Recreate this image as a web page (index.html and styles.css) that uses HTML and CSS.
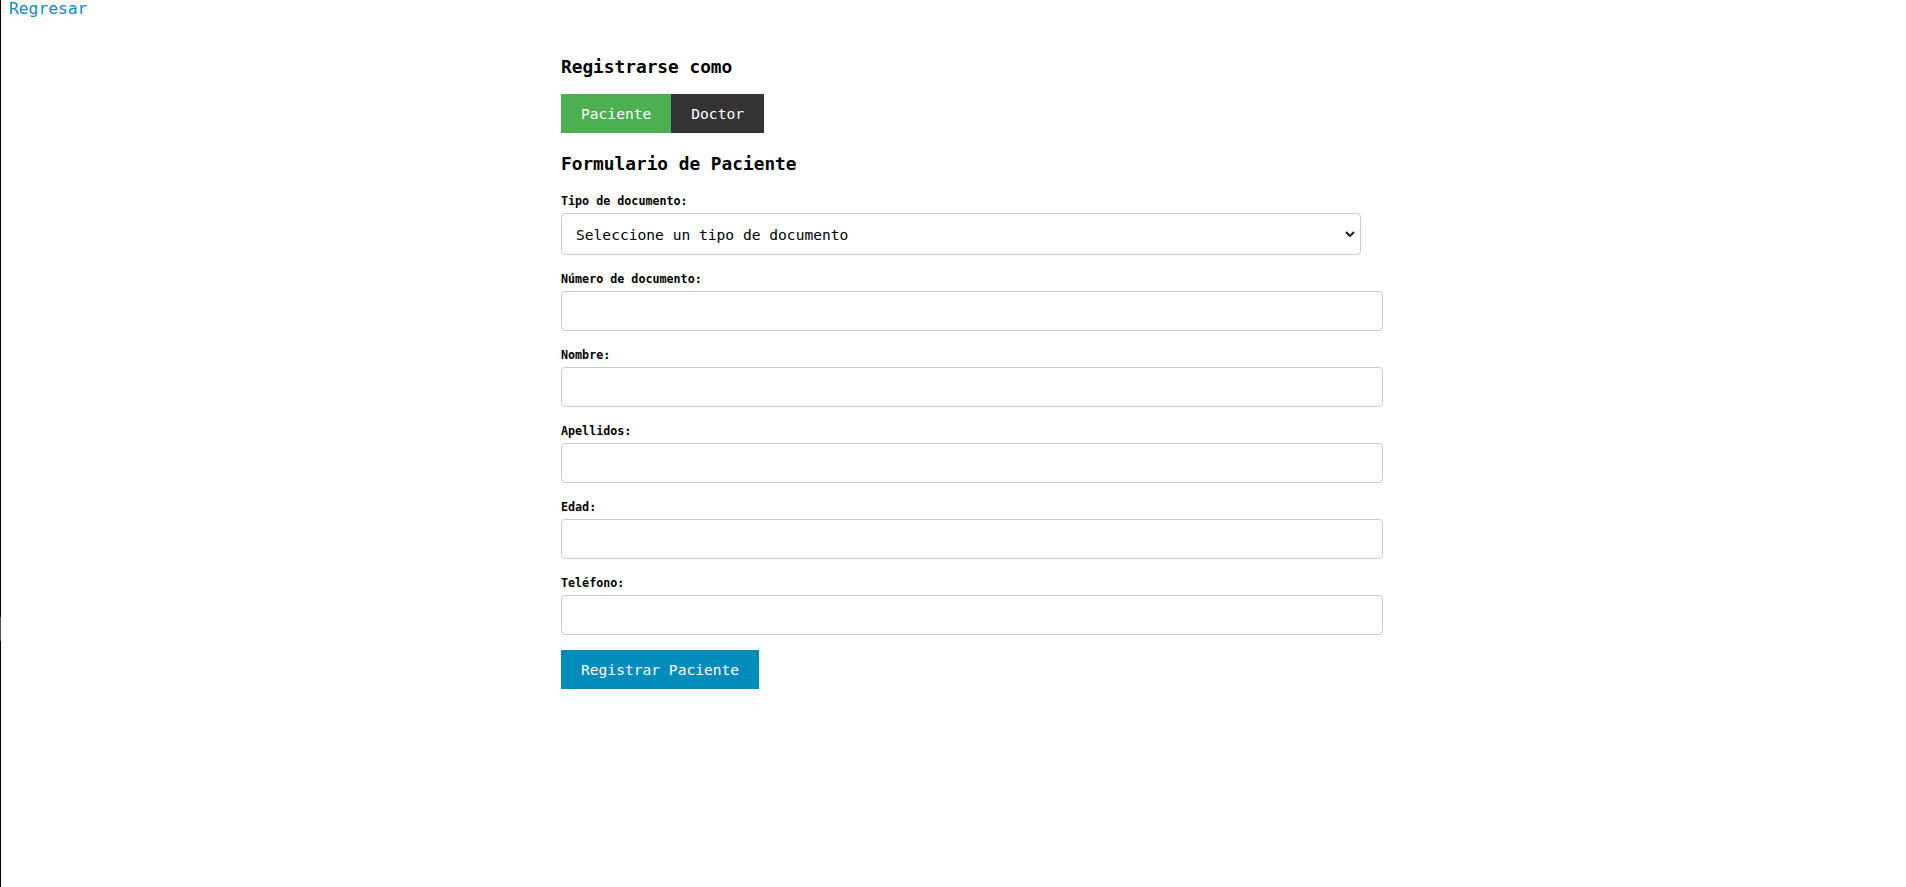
FILE: index.html
```html
<!DOCTYPE html>
<html lang="es">
<head>
<meta charset="utf-8">
<title>Registro</title>
<link rel="stylesheet" href="styles.css">
</head>
<body>
<a class="back" href="#">Regresar</a>
<div class="page">
  <main class="container">
    <h2 class="title">Registrarse como</h2>
    <div class="roles">
      <button class="role role-active" type="button">Paciente</button>
      <button class="role role-dark" type="button">Doctor</button>
    </div>
    <h2 class="title form-title">Formulario de Paciente</h2>
    <form class="form">
      <div class="field">
        <label class="label" for="tipo">Tipo de documento:</label>
        <div class="select-wrap">
          <select class="select" id="tipo">
            <option>Seleccione un tipo de documento</option>
            <option>Cédula de ciudadanía</option>
            <option>Tarjeta de identidad</option>
          </select>
          <svg class="chevron" width="10" height="6" viewBox="0 0 10 6"><path d="M1 1 L5 5 L9 1" fill="none" stroke="#1a1a1a" stroke-width="2"/></svg>
        </div>
      </div>
      <div class="field">
        <label class="label" for="num">Número de documento:</label>
        <input class="input" id="num" type="text">
      </div>
      <div class="field">
        <label class="label" for="nombre">Nombre:</label>
        <input class="input" id="nombre" type="text">
      </div>
      <div class="field">
        <label class="label" for="apellidos">Apellidos:</label>
        <input class="input" id="apellidos" type="text">
      </div>
      <div class="field">
        <label class="label" for="edad">Edad:</label>
        <input class="input" id="edad" type="text">
      </div>
      <div class="field">
        <label class="label" for="tel">Teléfono:</label>
        <input class="input" id="tel" type="text">
      </div>
      <button class="submit" type="button">Registrar Paciente</button>
    </form>
  </main>
</div>
</body>
</html>
```
FILE: styles.css
```css
html, body {
  background: #fff;
}
body {
  margin: 0;
  min-height: 887px;
  box-sizing: border-box;
  border-left: 1px solid #000;
  padding: 0 8px;
  font-family: "DejaVu Sans Mono", monospace;
  color: #000;
}
body::after {
  content: "";
  position: fixed;
  left: 0;
  top: 617px;
  width: 1px;
  height: 24px;
  background: #555;
}
.back {
  display: block;
  width: max-content;
  font-size: 16.3px;
  line-height: 17px;
  color: #1189c2;
  text-decoration: none;
}
.page {
  padding-left: 15px;
}
.container {
  width: 800px;
  margin: 38px auto 0;
}
.title {
  margin: 0;
  font-size: 17.8px;
  line-height: 24px;
  font-weight: bold;
}
.roles {
  display: flex;
  margin-top: 15px;
}
.role {
  border: 0;
  margin: 0;
  padding: 0 20px;
  height: 39px;
  line-height: 39px;
  font-family: "DejaVu Sans Mono", monospace;
  font-size: 14.6px;
  color: #fff;
  cursor: pointer;
}
.role-active {
  background: #4caf50;
}
.role-dark {
  background: #333333;
}
.form-title {
  margin-top: 19px;
}
.form {
  margin-top: 16px;
}
.field {
  margin-bottom: 15px;
}
.label {
  display: block;
  font-size: 11.7px;
  line-height: 15px;
  font-weight: bold;
  padding-top: 2px;
  margin-bottom: 4px;
}
.select-wrap {
  position: relative;
  width: 800px;
}
.select {
  display: block;
  width: 800px;
  height: 42px;
  box-sizing: border-box;
  margin: 0;
  padding: 0 14px;
  border: 1px solid #cccccc;
  border-radius: 4px;
  background: #fff;
  -webkit-appearance: none;
  appearance: none;
  font-family: "DejaVu Sans Mono", monospace;
  font-size: 14.6px;
  color: #000;
}
.chevron {
  position: absolute;
  right: 6px;
  top: 18px;
  pointer-events: none;
}
.input {
  display: block;
  width: 800px;
  height: 38px;
  box-sizing: content-box;
  margin: 0;
  padding: 0 10px;
  border: 1px solid #cccccc;
  border-radius: 4px;
  font-family: "DejaVu Sans Mono", monospace;
  font-size: 14.6px;
  background: #fff;
}
.submit {
  display: block;
  border: 0;
  margin: 1px 0 0;
  padding: 0 20px;
  height: 39px;
  line-height: 39px;
  background: #008cba;
  color: #fff;
  font-family: "DejaVu Sans Mono", monospace;
  font-size: 14.6px;
  cursor: pointer;
}
```
